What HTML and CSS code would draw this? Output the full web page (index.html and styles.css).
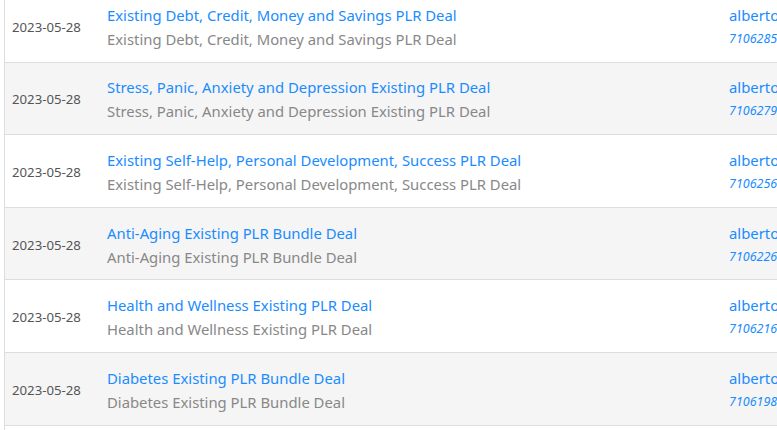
FILE: index.html
```html
<!DOCTYPE html>
<html>
<head>
<meta charset="utf-8">
<link rel="stylesheet" href="styles.css">
</head>
<body>
<div class="list">
  <div class="row">
    <div class="date">2023-05-28</div>
    <div class="title"><a class="link">Existing Debt, Credit, Money and Savings PLR Deal</a><span class="sub">Existing Debt, Credit, Money and Savings PLR Deal</span></div>
    <div class="user"><a class="link">albertokitchen</a><span class="num">7106285</span></div>
  </div>
  <div class="row alt">
    <div class="date">2023-05-28</div>
    <div class="title"><a class="link">Stress, Panic, Anxiety and Depression Existing PLR Deal</a><span class="sub">Stress, Panic, Anxiety and Depression Existing PLR Deal</span></div>
    <div class="user"><a class="link">albertokitchen</a><span class="num">7106279</span></div>
  </div>
  <div class="row">
    <div class="date">2023-05-28</div>
    <div class="title"><a class="link">Existing Self-Help, Personal Development, Success PLR Deal</a><span class="sub">Existing Self-Help, Personal Development, Success PLR Deal</span></div>
    <div class="user"><a class="link">albertokitchen</a><span class="num">7106256</span></div>
  </div>
  <div class="row alt">
    <div class="date">2023-05-28</div>
    <div class="title"><a class="link">Anti-Aging Existing PLR Bundle Deal</a><span class="sub">Anti-Aging Existing PLR Bundle Deal</span></div>
    <div class="user"><a class="link">albertokitchen</a><span class="num">7106226</span></div>
  </div>
  <div class="row">
    <div class="date">2023-05-28</div>
    <div class="title"><a class="link">Health and Wellness Existing PLR Deal</a><span class="sub">Health and Wellness Existing PLR Deal</span></div>
    <div class="user"><a class="link">albertokitchen</a><span class="num">7106216</span></div>
  </div>
  <div class="row alt">
    <div class="date">2023-05-28</div>
    <div class="title"><a class="link">Diabetes Existing PLR Bundle Deal</a><span class="sub">Diabetes Existing PLR Bundle Deal</span></div>
    <div class="user"><a class="link">albertokitchen</a><span class="num">7106198</span></div>
  </div>
  <div class="row">
    <div class="date">2023-05-28</div>
    <div class="title"><a class="link">Weight Loss Existing PLR Bundle Deal</a><span class="sub">Weight Loss Existing PLR Bundle Deal</span></div>
    <div class="user"><a class="link">albertokitchen</a><span class="num">7106190</span></div>
  </div>
</div>
</body>
</html>
```
FILE: styles.css
```css
html, body {
  margin: 0;
  padding: 0;
  background: #ffffff;
  overflow: hidden;
}
body {
  font-family: "Noto Sans", "Open Sans", sans-serif;
}
.list {
  margin-top: -10px;
  margin-left: 4px;
  width: 900px;
  border-left: 1px solid #dcdce2;
}
.row {
  display: grid;
  grid-template-columns: 102px 622px 1fr;
  align-items: center;
  height: 69.6px;
  padding-top: 2px;
  box-sizing: content-box;
  border-bottom: 1px solid #dcdce2;
  background: #ffffff;
}
.row.alt {
  background: #f5f5f5;
}
.date {
  padding-left: 7px;
  font-size: 13.2px;
  color: #555555;
}
.title, .user {
  display: flex;
  flex-direction: column;
}
.link {
  font-size: 14.85px;
  line-height: 24px;
  color: #1a8cff;
  white-space: nowrap;
}
.sub {
  font-size: 14.85px;
  line-height: 24px;
  color: #888888;
  white-space: nowrap;
}
.num {
  font-size: 12.5px;
  font-style: italic;
  line-height: 24px;
  color: #1a8cff;
}
```
